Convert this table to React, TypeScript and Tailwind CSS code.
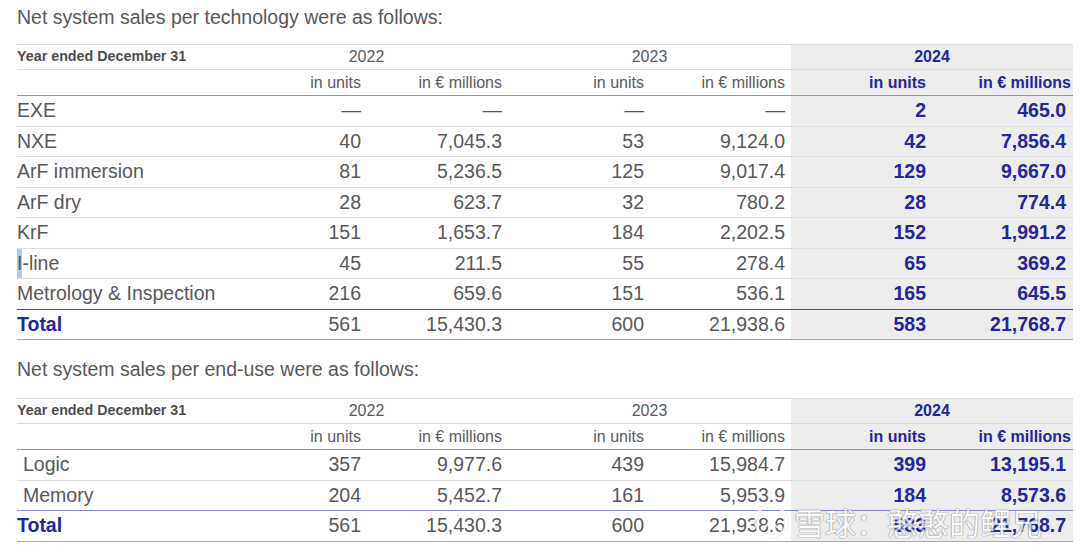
import React from "react";

type Row = { label: React.ReactNode; v: string[]; indent?: boolean; total?: boolean; line?: string };

const techRows: Row[] = [
  { label: "EXE", v: ["—", "—", "—", "—", "2", "465.0"] },
  { label: "NXE", v: ["40", "7,045.3", "53", "9,124.0", "42", "7,856.4"] },
  { label: "ArF immersion", v: ["81", "5,236.5", "125", "9,017.4", "129", "9,667.0"] },
  { label: "ArF dry", v: ["28", "623.7", "32", "780.2", "28", "774.4"] },
  { label: "KrF", v: ["151", "1,653.7", "184", "2,202.5", "152", "1,991.2"] },
  {
    label: (
      <>
        <span className="bg-[#b4cbe4]">I</span>-line
      </>
    ),
    v: ["45", "211.5", "55", "278.4", "65", "369.2"],
  },
  { label: "Metrology & Inspection", v: ["216", "659.6", "151", "536.1", "165", "645.5"], line: "border-b-[#4b4bb5]" },
  { label: "Total", v: ["561", "15,430.3", "600", "21,938.6", "583", "21,768.7"], total: true, line: "border-b-[#a4a4da]" },
];

const endUseRows: Row[] = [
  { label: "Logic", v: ["357", "9,977.6", "439", "15,984.7", "399", "13,195.1"], indent: true },
  { label: "Memory", v: ["204", "5,452.7", "161", "5,953.9", "184", "8,573.6"], indent: true, line: "border-b-[#8c8cd0]" },
  { label: "Total", v: ["561", "15,430.3", "600", "21,938.6", "583", "21,768.7"], total: true, line: "border-b-[#a4a4da]" },
];

const grid = "grid grid-cols-[208px_141px_142px_141px_142px_141px_141px]";
const gray = "bg-[#ededed]";

function Header() {
  return (
    <>
      <div className={`${grid} h-[26px] border-t border-b border-t-[#dcdcdc] border-b-[#dcdcdc] items-stretch`}>
        <div className="flex items-center text-[14.3px] font-bold text-[#4d4d4f]">Year ended December 31</div>
        <div className="col-span-2 flex items-center justify-center text-[16px] text-[#5a5a5c]">2022</div>
        <div className="col-span-2 flex items-center justify-center text-[16px] text-[#5a5a5c]">2023</div>
        <div className={`col-span-2 flex items-center justify-center text-[16px] font-bold text-[#25259c] ${gray}`}>2024</div>
      </div>
      <div className={`${grid} h-[26px] border-b border-b-[#8c8cd0] items-stretch text-[16px]`}>
        <div />
        <div className="flex items-center justify-end pr-[5px] text-[#5a5a5c]">in units</div>
        <div className="flex items-center justify-end pr-[6px] text-[#5a5a5c]">in € millions</div>
        <div className="flex items-center justify-end pr-[5px] text-[#5a5a5c]">in units</div>
        <div className="flex items-center justify-end pr-[6px] text-[#5a5a5c]">in € millions</div>
        <div className={`flex items-center justify-end pr-[6px] font-bold text-[#25259c] ${gray}`}>in units</div>
        <div className={`flex items-center justify-end pr-[2px] font-bold text-[#25259c] ${gray}`}>in € millions</div>
      </div>
    </>
  );
}

function DataRow({ r }: { r: Row }) {
  const pads = ["pr-[5px]", "pr-[6px]", "pr-[5px]", "pr-[6px]", "pr-[6px]", "pr-[7px]"];
  return (
    <div className={`${grid} h-[30.5px] border-b ${r.line ?? "border-b-[#dedede]"} items-stretch text-[19.5px]`}>
      <div
        className={`flex items-center ${r.indent ? "pl-[6px]" : ""} ${
          r.total ? "font-bold text-[#25259c]" : "text-[#58585a]"
        }`}
      >
        {r.label}
      </div>
      {r.v.map((x, i) => (
        <div
          key={i}
          className={`flex items-center justify-end ${pads[i]} ${
            i >= 4 ? `${gray} font-bold text-[#25259c]` : "text-[#58585a]"
          }`}
        >
          {x}
        </div>
      ))}
    </div>
  );
}

function Table({ title, rows, gap }: { title: string; rows: Row[]; gap: string }) {
  return (
    <div className="flex flex-col">
      <div className="h-[36px] flex items-center text-[19.5px] text-[#58585a]">{title}</div>
      <div className={`${gap} flex flex-col`}>
        <Header />
        {rows.map((r, i) => (
          <DataRow key={i} r={r} />
        ))}
      </div>
    </div>
  );
}

export default function App() {
  return (
    <div
      className="relative w-[1080px] h-[545px] bg-white overflow-hidden pl-[17px] pr-[7px]"
      style={{ fontFamily: '"Liberation Sans", Arial, sans-serif' }}
    >
      <Table title="Net system sales per technology were as follows:" rows={techRows} gap="mt-[8px]" />
      <div className="mt-[12px]">
        <Table title="Net system sales per end-use were as follows:" rows={endUseRows} gap="mt-[10px]" />
      </div>

      {/* watermark */}
      <div className="absolute left-[754px] top-[504px] flex items-center gap-[6px] opacity-75 pointer-events-none">
        <div className="w-[34px] h-[34px] rounded-full border-[3px] border-white flex items-center justify-center [box-shadow:0_0_1px_#888,inset_0_0_1px_#888]">
          <svg width="20" height="20" viewBox="0 0 24 24" fill="none" stroke="#ffffff" strokeWidth="3" strokeLinecap="round">
            <path d="M5 5 Q12 12 19 19" />
            <path d="M19 5 Q12 12 5 19" />
          </svg>
        </div>
        <span
          className="text-[31px] leading-none text-white [text-shadow:0_0_1px_#777,0_0_1px_#777,0_0_1px_#777]"
          style={{ fontFamily: '"Noto Sans CJK SC", sans-serif' }}
        >
          雪球：憨憨的鲤兄
        </span>
      </div>
    </div>
  );
}
